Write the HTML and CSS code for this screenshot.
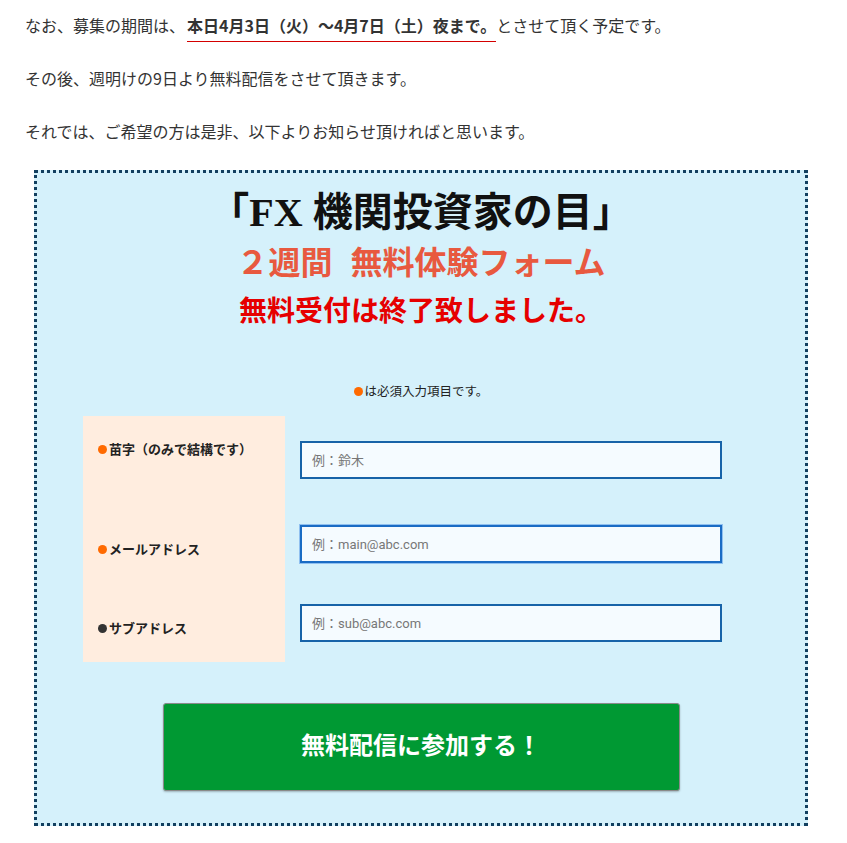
FILE: index.html
```html
<!DOCTYPE html>
<html lang="ja">
<head>
<meta charset="utf-8">
<title>FX 機関投資家の目 無料体験フォーム</title>
<link rel="stylesheet" href="styles.css">
</head>
<body>

  <div class="page">
    <p>なお、募集の期間は、<span class="period">本日4月3日（火）～4月7日（土）夜まで。</span>とさせて頂く予定です。</p>
    <p>その後、週明けの9日より無料配信をさせて頂きます。</p>
    <p>それでは、ご希望の方は是非、以下よりお知らせ頂ければと思います。</p>

    <div class="form-box">
      <div class="form-title">「FX 機関投資家の目」</div>
      <div class="form-subtitle"><span class="gap">２週間</span>無料体験フォーム</div>
      <div class="form-closed">無料受付は終了致しました。</div>

      <div class="required-note"><span class="dot"></span>は必須入力項目です。</div>

      <form class="form-table">
        <div class="form-row first">
          <label class="form-label"><span><span class="dot"></span>苗字（のみで結構です）</span></label>
          <div class="form-field"><input type="text" placeholder="例：鈴木"></div>
        </div>
        <div class="form-row">
          <label class="form-label"><span><span class="dot"></span>メールアドレス</span></label>
          <div class="form-field"><input type="text" class="active" placeholder="例：main@abc.com"></div>
        </div>
        <div class="form-row last">
          <label class="form-label"><span><span class="dot dark"></span>サブアドレス</span></label>
          <div class="form-field"><input type="text" placeholder="例：sub@abc.com"></div>
        </div>
      </form>

      <button class="submit-button" type="button">無料配信に参加する！</button>
    </div>
  </div>

</body>
</html>
```

FILE: styles.css
```css
:root {
  /* Colors */
  --text-color: #333;
  --box-bg: #d5f1fb;
  --box-border: #123f5f;
  --label-bg: #ffeddf;
  --input-border: #1763a8;
  --input-bg: #f5fbff;
  --orange-dot: #ff6a00;
  --subtitle: #e8593f;
  --closed: #e60000;
  --button-green: #009933;
}

body {
  margin: 0;
  padding: 11px 25px 0;
  font-family: "Noto Sans CJK JP", "Noto Sans", sans-serif;
  color: var(--text-color);
  background-color: #fff;
}

.page p {
  margin: 0 0 24px;
  font-size: 16px;
  line-height: 28.8px;
}

.period {
  font-weight: 700;
  border-bottom: 1px solid #d40000;
  padding-bottom: 4px;
  margin-left: 2px;
}

.form-box {
  width: 768px;
  margin: 25px 0 0 9px;
  padding: 17px 0 32px;
  border: 3px dotted var(--box-border);
  background-color: var(--box-bg);
  text-align: center;
}

.form-title {
  font-family: "Liberation Serif", "Noto Sans CJK JP", serif;
  font-size: 40px;
  font-weight: 700;
  line-height: 46px;
  color: #111;
}

.form-subtitle {
  margin-top: 3px;
  font-size: 32px;
  font-weight: 700;
  line-height: 42px;
  color: var(--subtitle);
}

.form-subtitle .gap {
  margin-right: 18px;
}

.form-closed {
  margin-top: 10px;
  font-size: 28px;
  font-weight: 700;
  line-height: 36px;
  color: var(--closed);
}

.required-note {
  margin-top: 54px;
  font-size: 12.5px;
  line-height: 20px;
  color: #222;
}

.dot {
  display: inline-block;
  width: 9px;
  height: 9px;
  margin-right: 2px;
  border-radius: 50%;
  background-color: var(--orange-dot);
  vertical-align: 0;
}

.dot.dark {
  background-color: #333;
}

/* Form rows */
.form-table {
  margin: 15px 0 0 46px;
  text-align: left;
}

.form-row {
  display: grid;
  grid-template-columns: 202px 1fr;
  align-items: center;
  height: 80px;
}

.form-row.first {
  height: 88px;
}

.form-row.last {
  height: 78px;
}

.form-label {
  align-self: stretch;
  display: flex;
  align-items: center;
  padding: 8px 0 0 15px;
  background-color: var(--label-bg);
  font-size: 13px;
  font-weight: 700;
  color: #222;
}

.form-row.first .form-label {
  align-items: flex-start;
  padding-top: 23px;
}

.form-field {
  padding-left: 15px;
}

.form-field input {
  box-sizing: border-box;
  width: 422px;
  height: 38px;
  padding: 0 10px;
  border: 2px solid var(--input-border);
  background-color: var(--input-bg);
  font-family: Roboto, "Noto Sans CJK JP", sans-serif;
  font-size: 13px;
  color: #333;
  outline: none;
}

.form-field input::placeholder {
  color: #777;
}

.form-field input.active {
  border-color: #1a6cc4;
  box-shadow: 0 0 0 1px #8fc0f0;
}

.submit-button {
  display: block;
  width: 517px;
  height: 88px;
  margin: 41px auto 0;
  padding: 0 0 7px;
  border: 1px solid #8a8a8a;
  border-radius: 3px;
  background-color: var(--button-green);
  box-shadow: 0 1px 2px rgba(0, 0, 0, 0.25);
  font-family: "Noto Sans CJK JP", sans-serif;
  font-size: 24px;
  font-weight: 700;
  color: #fff;
  cursor: pointer;
}
```
